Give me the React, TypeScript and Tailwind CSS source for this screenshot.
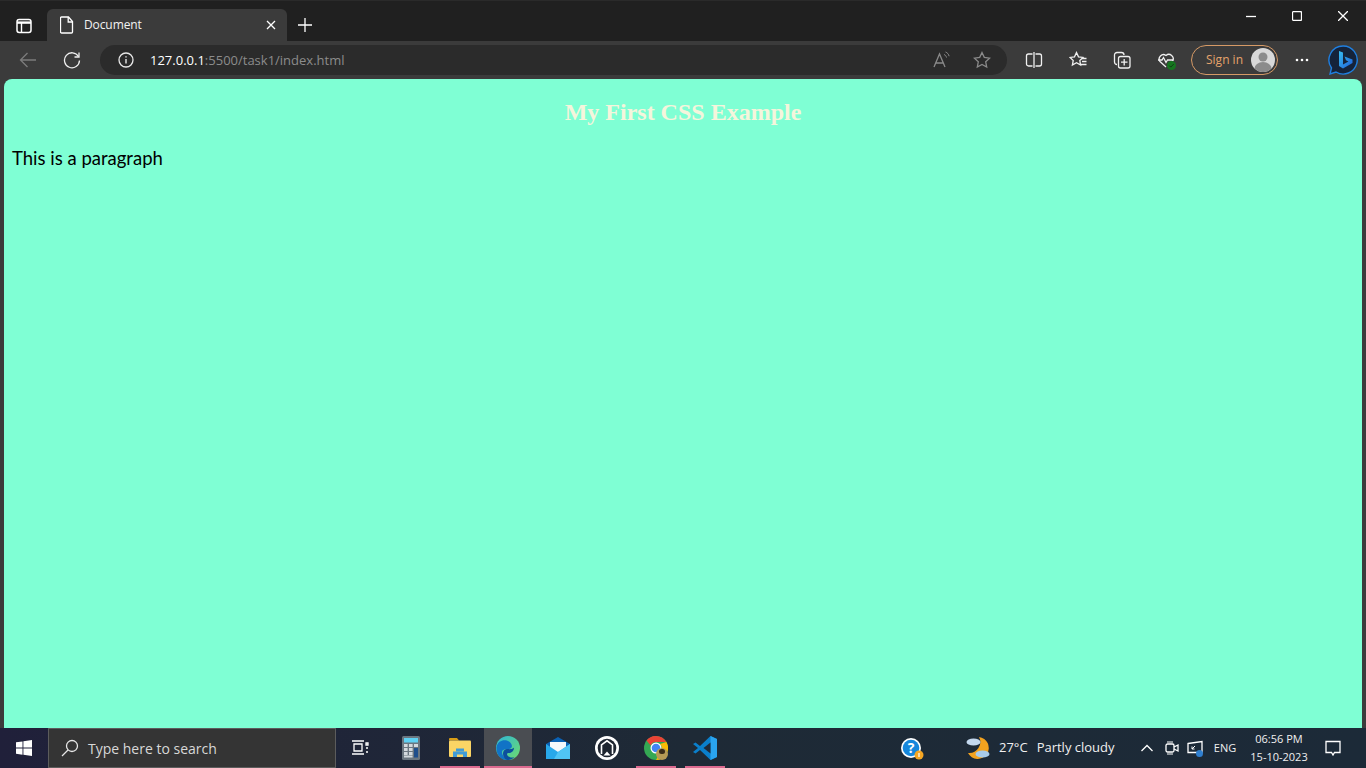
const uiFont = { fontFamily: '"Open Sans", "Noto Sans", sans-serif' }

function Icon({ size = 20, children, className = '' }: { size?: number; children: React.ReactNode; className?: string }) {
  return (
    <svg width={size} height={size} viewBox={`0 0 ${size} ${size}`} fill="none" stroke="currentColor" strokeWidth="1.3" className={`block shrink-0 ${className}`}>
      {children}
    </svg>
  )
}

function TitleBar() {
  return (
    <div className="h-[41px] bg-[#202020] flex shrink-0 border-t border-[#2a2a2a]">
      <div className="w-[47px] h-full flex items-center justify-center text-white pt-[9px]">
        <Icon size={16}>
          <rect x="1" y="1.500" width="14" height="13" rx="2.200" strokeWidth="1.500" />
          <path d="M1 4.600h14" strokeWidth="2.400" />
          <path d="M5.500 5v9" strokeWidth="1.400" />
        </Icon>
      </div>
      <div className="w-[240px] mt-[8px] h-[32px] bg-[#3b3b3b] rounded-t-[6px] flex items-center text-white">
        <div className="ml-[13px] w-[14px]">
          <svg width="14" height="18" viewBox="0 0 14 18" fill="none" stroke="currentColor" strokeWidth="1.300" className="block">
            <path d="M1.500 1h7l4 4.500V16a1 1 0 0 1-1 1h-10a1 1 0 0 1-1-1V2a1 1 0 0 1 1-1z" />
            <path d="M8.200 1v5h4.300" />
          </svg>
        </div>
        <span className="ml-[10px] flex-1 text-[12px] leading-[16px] tracking-[-0.1px] text-[#f2f2f2] mt-[-1px]" style={uiFont}>Document</span>
        <Icon size={10} className="mr-[11px]">
          <path d="M1 1l8 8M9 1l-8 8" />
        </Icon>
      </div>
      <div className="w-[36px] h-full flex items-center justify-center text-white pt-[8px]">
        <Icon size={16}>
          <path d="M8 1v14M1 8h14" />
        </Icon>
      </div>
      <div className="flex-1" />
      <div className="flex h-[30px] text-white">
        <div className="w-[46px] flex items-center justify-center">
          <Icon size={10}><path d="M0 5.500h10" /></Icon>
        </div>
        <div className="w-[46px] flex items-center justify-center">
          <Icon size={10}><rect x="0.500" y="0.500" width="9" height="9" rx="1.200" /></Icon>
        </div>
        <div className="w-[46px] flex items-center justify-center">
          <Icon size={10}><path d="M0 0l10 10M10 0l-10 10" /></Icon>
        </div>
      </div>
    </div>
  )
}

function AddressBar() {
  return (
    <div className="flex-1 h-[30px] ml-[12px] bg-[#2b2b2b] rounded-full flex items-center">
      <div className="ml-[18px] text-[#e8e8e8]">
        <Icon size={16}>
          <circle cx="8" cy="8" r="7" />
          <path d="M8 7v4.500M8 4.200v1.200" strokeWidth="1.400" />
        </Icon>
      </div>
      <span className="ml-[16px] flex-1 text-[13px] pt-[1px] text-[#8c8c8c]" style={uiFont}>
        <span className="text-white">127.0.0.1</span>:5500/task1/index.html
      </span>
      <div className="text-[#8a8a8a] mr-[22px]">
        <Icon size={18}>
          <path d="M1 16L6.500 3 12 16M2.800 12h7.400" />
          <path d="M11 3.500c1.400.6 2.200 1.600 2.500 3M12.500 1c2 .8 3.200 2.200 3.600 4.200" strokeWidth="1" />
        </Icon>
      </div>
      <div className="text-[#8a8a8a] mr-[16px]">
        <Icon size={18}>
          <path d="M9 1.500l2.300 4.900 5.300.7-3.900 3.700 1 5.300L9 13.500l-4.700 2.600 1-5.300L1.400 7.100l5.300-.7z" />
        </Icon>
      </div>
    </div>
  )
}

function BingLogo() {
  return (
    <svg width="30" height="30" viewBox="0 0 30 30" fill="none" className="block shrink-0">
      <defs>
        <linearGradient id="bingB" x1="0" y1="0" x2="1" y2="1">
          <stop offset="0" stopColor="#37bdf0" />
          <stop offset="1" stopColor="#1f5fd8" />
        </linearGradient>
      </defs>
      <path d="M15 1a14 14 0 1 1-7 26l-6 2 1.500-6A14 14 0 0 1 15 1z" fill="#15233a" stroke="#1f7fe0" strokeWidth="1.400" />
      <path d="M11 6l4 1.500v12l5.500-3-2.500-1.200-1.500-3.800 8 3v3.500l-9.500 5.500-4-2.500z" fill="url(#bingB)" />
    </svg>
  )
}

function Toolbar() {
  return (
    <div className="h-[38px] bg-[#3b3b3b] flex items-center shrink-0">
      <div className="w-[56px] flex justify-center text-[#7c7c7c]">
        <Icon size={18}>
          <path d="M17 9H1.500M8.500 2L1.500 9l7 7" />
        </Icon>
      </div>
      <div className="w-[32px] flex justify-center text-[#f0f0f0]">
        <Icon size={18}>
          <path d="M15.500 5.500A7.500 7.500 0 1 0 16.500 9.500" />
          <path d="M16 1.500v4.500h-4.500" />
        </Icon>
      </div>
      <AddressBar />
      <div className="w-[184px] pl-[18px] flex items-center gap-[26px] text-[#f0f0f0]">
        <Icon size={18}>
          <rect x="1.500" y="3" width="15" height="12" rx="2" />
          <path d="M9 1v16" stroke="#3b3b3b" strokeWidth="3" />
          <path d="M9 1v16" />
        </Icon>
        <Icon size={18}>
          <path d="M7.500 1.500l2 4.300 4.500.600-3.200 3.100.800 4.600-4.100-2.300-4.100 2.300.800-4.600L1 6.400l4.500-.600z" />
          <path d="M13 7.500h4.500M13 10.500h4.500M12 13.500h5.500" />
        </Icon>
        <Icon size={18}>
          <path d="M4 13.500a2.500 2.500 0 0 1-2.500-2.500V4A2.500 2.500 0 0 1 4 1.500h4.500A2.500 2.500 0 0 1 11 4" />
          <rect x="5.500" y="5.500" width="11.500" height="11.500" rx="2" />
          <path d="M11.200 8v6.500M8 11.200h6.500" />
        </Icon>
        <div className="relative">
          <Icon size={18}>
            <path d="M9 16L3 10.500A4.300 4.300 0 0 1 9 4.500a4.300 4.300 0 0 1 6.500 5.500" />
            <path d="M1 9h4l1.500-2.500 2.500 5 1.500-2.500h6" />
          </Icon>
          <svg width="9" height="9" viewBox="0 0 9 9" className="absolute left-[10px] top-[10px] block">
            <circle cx="4.500" cy="4.500" r="4.500" fill="#16751f" />
            <path d="M2.300 4.600l1.500 1.500 2.900-3" fill="none" stroke="#0f3d14" strokeWidth="1" />
          </svg>
        </div>
      </div>
      <div className="w-[87px] h-[30px] rounded-full border border-[#d69a66] flex items-center justify-between pl-[14px] pr-[2px]">
        <span className="text-[12px] text-[#e5a36c]" style={uiFont}>Sign in</span>
        <svg width="24" height="24" viewBox="0 0 24 24" className="block shrink-0">
          <circle cx="12" cy="12" r="12" fill="#d8d8d8" />
          <circle cx="12" cy="9" r="4.500" fill="#8b8b8b" />
          <path d="M3.500 20.500a8.500 6.500 0 0 1 17 0A12 12 0 0 1 3.500 20.500z" fill="#8b8b8b" />
        </svg>
      </div>
      <div className="w-[47px] flex justify-center text-white">
        <svg width="14" height="4" viewBox="0 0 14 4" className="block fill-current">
          <circle cx="2" cy="2" r="1.300" />
          <circle cx="7" cy="2" r="1.300" />
          <circle cx="12" cy="2" r="1.300" />
        </svg>
      </div>
      <div className="w-[36px] flex justify-center">
        <BingLogo />
      </div>
      <div className="w-[5px]" />
    </div>
  )
}

function WindowsLogo() {
  return (
    <svg width="16" height="16" viewBox="0 0 16 16" className="block fill-white">
      <path d="M0 2.300l6.500-.9v6.200H0zM7.400 1.300L16 0v7.600H7.400zM0 8.500h6.500v6.200L0 13.800zM7.400 8.500H16V16l-8.600-1.200z" />
    </svg>
  )
}

function Calculator() {
  return (
    <svg width="18" height="24" viewBox="0 0 18 24" className="block">
      <rect width="18" height="24" rx="1.500" fill="#6b7680" />
      <rect x="2" y="2" width="14" height="4.500" fill="#5fd0f2" />
      {[8, 12, 16].map((y) =>
        [2, 7].map((x) => <rect key={`${x}-${y}`} x={x} y={y} width="3.600" height="3" fill="#d4d9de" />)
      )}
      <rect x="12" y="8" width="4" height="3" fill="#d4d9de" />
      <rect x="12" y="12" width="4" height="9.500" fill="#1f4e8c" />
      <rect x="2" y="19.500" width="8.600" height="2" fill="#d4d9de" />
    </svg>
  )
}

function Explorer() {
  return (
    <svg width="22" height="20" viewBox="0 0 22 20" className="block">
      <path d="M0 1a1 1 0 0 1 1-1h7l2 2.500H0z" fill="#d99e16" />
      <rect y="2.500" width="22" height="16.500" rx="1" fill="#fbd565" />
      <path d="M4 19v-5.500h14V19h-4v-2.500H8V19z" fill="#3f9bd6" />
      <rect x="7" y="10.500" width="8" height="3" fill="#3f9bd6" />
    </svg>
  )
}

function EdgeLogo() {
  return (
    <svg width="24" height="24" viewBox="0 0 24 24" className="block">
      <defs>
        <linearGradient id="edgeGreen" x1="0" y1="0" x2="1" y2="1">
          <stop offset="0" stopColor="#2db6d8" />
          <stop offset="1" stopColor="#6fdc6a" />
        </linearGradient>
      </defs>
      <circle cx="12" cy="12" r="12" fill="url(#edgeGreen)" />
      <path d="M0.500 11C2 4 9 3 13 5.500c3 2 4 5.500 1.500 7-2.500 1.500-6-.5-8 2-1.500 2 0 6.500 5 9.500C4 24 0 18 0.500 11z" fill="#1173c6" />
      <path d="M11 24c-4-2-5-7-3-9.500 2-2.200 5-1 7.500-1.500 2-.5 2.500-1.500 2.500-1.500 0 4-3 5.500-5 5.500-2 0-2.500 1-1.500 2.500s4 3 7 1.500C17 23 14 24 11 24z" fill="#0c4f9e" />
    </svg>
  )
}

function MailLogo() {
  return (
    <svg width="24" height="22" viewBox="0 0 24 22" className="block">
      <path d="M12 0l12 7v3H0V7z" fill="#0a62b5" />
      <path d="M4 5h16v7l-8 4-8-4z" fill="#f4f8fb" />
      <path d="M0 7l12 8 12-8v15H0z" fill="#28a8ea" />
      <path d="M12 15l12-8v15H8z" fill="#50c4f5" />
    </svg>
  )
}

function ArchLogo() {
  return (
    <svg width="24" height="24" viewBox="0 0 24 24" className="block">
      <circle cx="12" cy="12" r="12" fill="#ffffff" />
      <circle cx="12" cy="12" r="9.300" fill="#1e2530" />
      <path d="M6.500 18V8.800L12 4.800l5.500 4V18" fill="none" stroke="#ffffff" strokeWidth="1.600" />
      <path d="M8.500 19.500l3.500-4 3.500 4z" fill="#ffffff" />
    </svg>
  )
}

function ChromeLogo() {
  return (
    <div className="relative w-[24px] h-[24px]">
      <svg width="24" height="24" viewBox="0 0 24 24" className="block">
        <circle cx="12" cy="12" r="12" fill="#34a853" />
        <path d="M12 0a12 12 0 0 1 10.400 6H12a6 6 0 0 0-5.400 3.400L2.500 4.400A12 12 0 0 1 12 0z" fill="#ea4335" />
        <path d="M22.400 6A12 12 0 0 1 12 24l5.200-9A6 6 0 0 0 16 8z" fill="#fbbc05" />
        <circle cx="12" cy="12" r="5.500" fill="#ffffff" />
        <circle cx="12" cy="12" r="4.300" fill="#4285f4" />
      </svg>
      <span className="absolute left-[12px] top-[12px] w-[12px] h-[12px] rounded-full bg-[#b59a55]" />
      <span className="absolute left-[15px] top-[13px] w-[6px] h-[5px] rounded-full bg-[#3a2c18]" />
    </div>
  )
}

function VsCodeLogo() {
  return (
    <svg width="24" height="24" viewBox="0 0 24 24" className="block">
      <path d="M17.500 0L24 3v18l-6.500 3L7 14l-4.500 3.500L0 16l5-4-5-4 2.500-1.500L7 10z" fill="#0a7fcb" />
      <path d="M17.500 0L24 3v18l-6.500 3z" fill="#2aa4ef" />
      <path d="M17.500 6.500L10.500 12l7 5.500z" fill="#1f2a38" />
    </svg>
  )
}

const pinned = [
  { id: 'calc', node: <Calculator />, mark: false, active: false },
  { id: 'explorer', node: <Explorer />, mark: true, active: false },
  { id: 'edge', node: <EdgeLogo />, mark: true, active: true },
  { id: 'mail', node: <MailLogo />, mark: false, active: false },
  { id: 'arch', node: <ArchLogo />, mark: false, active: false },
  { id: 'chrome', node: <ChromeLogo />, mark: true, active: false },
  { id: 'vscode', node: <VsCodeLogo />, mark: true, active: false },
]

function Taskbar() {
  return (
    <div className="h-[40px] shrink-0 flex items-stretch text-white bg-gradient-to-r from-[#20203a] via-[#1e2a36] to-[#1c2a38]" style={uiFont}>
      <div className="w-[48px] flex items-center justify-center">
        <WindowsLogo />
      </div>
      <div className="w-[288px] bg-[#343434] border border-[#5c5c5c] flex items-center">
        <div className="ml-[12px] text-[#e6e6e6]">
          <Icon size={18}>
            <circle cx="11" cy="7" r="5.500" />
            <path d="M7 11l-6 6" />
          </Icon>
        </div>
        <span className="ml-[9px] text-[14px] text-[#d8d8d8]">Type here to search</span>
      </div>
      <div className="w-[50px] pr-[2px] flex items-center justify-center">
        <Icon size={18}>
          <path d="M1 2h12M1 15h12M3 5h8v7H3zM15 4h2v2h-2z" />
          <path d="M15 9h2M15 13h2" />
        </Icon>
      </div>
      {pinned.map((item) => (
        <div key={item.id} className={`relative flex items-center justify-center ${item.active ? 'w-[48px] mr-[1px] bg-[#4a4d52]' : 'w-[49px]'}`}>
          {item.node}
          {item.mark && (
            <span className={`absolute bottom-0 h-[2px] bg-[#dc6a90] ${item.active ? 'left-0 right-0' : 'left-[5px] right-[4px]'}`} />
          )}
        </div>
      ))}
      <div className="flex-1" />
      <div className="w-[48px] mr-[30px] flex items-center justify-center">
        <svg width="24" height="24" viewBox="0 0 24 24" className="block">
          <circle cx="11" cy="12" r="10" fill="#ffffff" />
          <circle cx="11" cy="12" r="8.300" fill="#1687dc" />
          <text x="11" y="17" textAnchor="middle" fontSize="14" fontWeight="700" fill="#ffffff" fontFamily="Open Sans">?</text>
          <circle cx="19" cy="19" r="4.500" fill="#f5a623" />
          <path d="M19 17v4" stroke="#ffffff" strokeWidth="1.200" />
        </svg>
      </div>
      <div className="w-[24px] flex items-center justify-center">
        <svg width="24" height="24" viewBox="0 0 24 24" className="block">
          <path d="M13 1a11 11 0 1 1-11 16 11 11 0 0 0 11-16z" fill="#f2a21f" />
          <ellipse cx="7.500" cy="6" rx="7" ry="3.600" fill="#c3d8ee" />
          <ellipse cx="16.500" cy="18" rx="7" ry="3.600" fill="#a8cbe9" />
        </svg>
      </div>
      <div className="w-[133px] ml-[9px] flex items-center text-[13px] text-[#f0f0f0]">
        <span>27°C</span>
        <span className="ml-[9px]">Partly cloudy</span>
      </div>
      <div className="w-[30px] flex items-center justify-center">
        <Icon size={14}><path d="M1.500 10L7 4.500 12.500 10" /></Icon>
      </div>
      <div className="w-[20px] flex items-center justify-center">
        <Icon size={14}>
          <rect x="1" y="3" width="8" height="8" rx="1.500" />
          <path d="M9 6l4-2v6l-4-2" />
          <path d="M2 1h6M2 13h6" strokeWidth="1" />
        </Icon>
      </div>
      <div className="w-[26px] flex items-center justify-center relative">
        <Icon size={16}>
          <path d="M1 3.500l14-2v11H1z" />
          <path d="M5 9l3-3M5 6.500V9h2.500" strokeWidth="1" />
        </Icon>
        <span className="absolute left-[14px] top-[22px] w-[7px] h-[7px] rounded-full bg-[#2f7fd0]" />
      </div>
      <div className="w-[34px] flex items-center justify-center text-[11px] text-[#f0f0f0]">ENG</div>
      <div className="w-[66px] ml-[4px] mr-[1px] flex flex-col items-center justify-center text-[11px] leading-[18px] text-[#f0f0f0]">
        <span>06:56 PM</span>
        <span>15-10-2023</span>
      </div>
      <div className="w-[40px] mr-[13px] flex items-center justify-center">
        <Icon size={16}>
          <path d="M1 1.500h14V12.500h-5.500L8 15l-1.500-2.500H1z" />
        </Icon>
      </div>
    </div>
  )
}

export default function App() {
  return (
    <div className="w-[1366px] h-[768px] overflow-hidden flex flex-col bg-[#3b3b3b]">
      <TitleBar />
      <Toolbar />
      <div className="flex-1 mx-[4px] bg-[#7fffd4] rounded-t-[8px]">
        <h1 className="text-[24px] leading-[27px] font-bold text-center text-[#f5f5dc] pt-[20px]" style={{ fontFamily: '"Liberation Serif", serif' }}>
          My First CSS Example
        </h1>
        <p className="text-[18.5px] leading-[24px] text-black pl-[8px] mt-[20px]" style={{ fontFamily: 'Lato, sans-serif' }}>
          This is a paragraph
        </p>
      </div>
      <Taskbar />
    </div>
  )
}
